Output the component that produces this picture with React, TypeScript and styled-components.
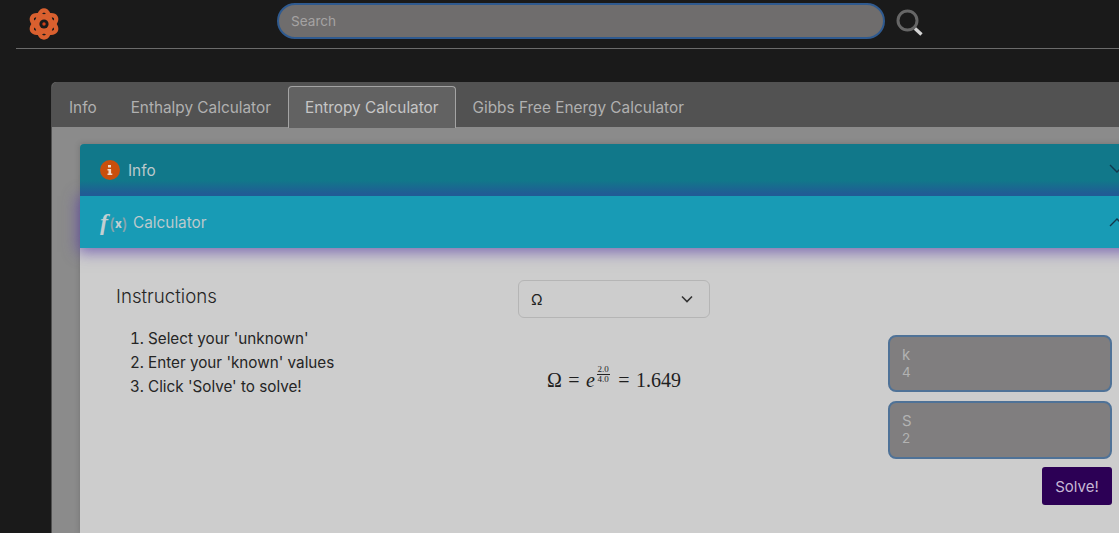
import React from "react";
import styled, { createGlobalStyle } from "styled-components";

const Global = createGlobalStyle`
  html, body { margin: 0; padding: 0; height: 533px; overflow: hidden; background: #1a1a1a; }
  body { font-family: Inter, Roboto, "Liberation Sans", sans-serif; }
  #root { height: 533px; overflow: hidden; }
`;

const Page = styled.div`
  width: 1119px;
  height: 533px;
  overflow: hidden;
  background: #1a1a1a;
`;
const Header = styled.header`
  display: flex;
  align-items: center;
  height: 48px;
  margin-left: 16px;
  border-bottom: 1px solid #6b6b6b;
`;
const LogoSlot = styled.div`
  display: flex;
  width: 261px;
  padding-left: 12px;
  box-sizing: border-box;
`;
const Search = styled.input`
  width: 608px;
  height: 36px;
  margin-top: -6px;
  box-sizing: border-box;
  border-radius: 18px;
  border: 2px solid #2f5a8f;
  background: #6f6d6d;
  padding: 0 12px;
  font: 13.6px Inter, sans-serif;
  outline: none;
  &::placeholder { color: #a5a3a3; opacity: 1; }
`;
const SearchIcon = styled.svg`
  margin: -3px 0 0 10px;
`;
const Main = styled.main`
  padding: 33px 0 0 52px;
`;
const Panel = styled.section`
  width: 1100px;
  height: 460px;
  background: #8b8b8b;
  border-radius: 5px 0 0 0;
  box-shadow: -1px 0 0 #505050;
  overflow: hidden;
`;
const TabBar = styled.nav`
  display: flex;
  height: 46px;
  box-sizing: border-box;
  padding: 4px 0 0;
  background: #525252;
  box-shadow: inset 0 -1px 0 #8b8b8b;
`;
const Tab = styled.div<{ $active?: boolean }>`
  box-sizing: border-box;
  height: 42px;
  padding: 0 16px;
  display: flex;
  align-items: center;
  font-size: 15.35px;
  color: ${p => (p.$active ? "#c6c6c6" : "#b0b0b0")};
  background: ${p => (p.$active ? "#626262" : "transparent")};
  border: 1px solid ${p => (p.$active ? "#a4a4a4" : "transparent")};
  border-bottom: 0;
  border-radius: 4px 4px 0 0;
`;
const Accordion = styled.div`
  width: 1060px;
  margin: 16px 0 0 28px;
  box-shadow: 0 0 6px rgba(0, 0, 0, 0.18);
`;
const InfoHead = styled.div`
  display: flex;
  align-items: center;
  height: 52px;
  box-sizing: border-box;
  padding: 0 0 0 20px;
  gap: 8px;
  background: linear-gradient(#11788a 0, #11788a 70%, #215b95 96%);
  color: #bcc9cc;
  font-size: 15.35px;
  border-radius: 4px 4px 0 0;
  position: relative;
  z-index: 1;
`;
const CalcHead = styled.div`
  position: relative;
  display: flex;
  align-items: center;
  height: 52px;
  box-sizing: border-box;
  padding-left: 20px;
  gap: 8px;
  background: #189bb5;
  color: #bcc9cc;
  font-size: 15.35px;
  box-shadow: 0 2px 14px 2px rgba(95, 70, 170, 0.75);
`;
const Chevron = styled.svg`
  position: absolute;
  right: 13px;
  top: 16px;
`;
const FxIcon = styled.span`
  display: inline-flex;
  align-items: center;
  color: #c2cfd2;
  width: 25px;
  white-space: nowrap;
`;
const FxF = styled.span`
  font: italic 700 24px "Liberation Serif", serif;
  margin-right: 1px;
`;
const FxParen = styled.span`
  font-size: 16px;
  font-weight: 500;
  color: #8aa5ad;
  margin-top: 4px;
`;
const FxX = styled.span`
  font-size: 11.5px;
  font-weight: 800;
  color: #c2cfd2;
  margin-top: 4px;
`;
const Body = styled.div`
  display: flex;
  height: 285px;
  background: #cdcdcd;
`;
const Left = styled.div`
  width: 402px;
  margin-left: 36px;
  padding-top: 37px;
  color: #252525;
`;
const Title = styled.h2`
  margin: 0;
  font-size: 18.7px;
  line-height: 24px;
  font-weight: 300;
`;
const Steps = styled.ol`
  margin: 18px 0 0;
  padding-left: 32px;
  font-size: 15.25px;
  line-height: 24px;
`;
const Middle = styled.div`
  width: 192px;
  padding-top: 32px;
  display: flex;
  flex-direction: column;
  align-items: center;
`;
const Select = styled.div`
  align-self: stretch;
  height: 38px;
  box-sizing: border-box;
  display: flex;
  align-items: center;
  justify-content: space-between;
  padding: 0 15px 0 12px;
  border: 1px solid #b5b5b5;
  border-radius: 6px;
  font: 15px Inter, sans-serif;
  color: #222;
`;
const Equation = styled.div`
  margin-top: 51px;
  display: flex;
  align-items: center;
  gap: 6.5px;
  white-space: nowrap;
  font: 20px "Liberation Serif", serif;
  color: #1f1f1f;
`;
const Base = styled.i`
  margin-right: 1px;
`;
const Power = styled.span`
  display: inline-flex;
  align-items: center;
  margin-left: -6px;
  margin-right: 2px;
  position: relative;
  top: -1px;
`;
const Fraction = styled.span`
  display: inline-flex;
  flex-direction: column;
  align-items: center;
  font-size: 9px;
  line-height: 9px;
  margin-top: -10px;
`;
const Numerator = styled.span`
  border-bottom: 1px solid #222;
  padding: 0 1px;
`;
const Right = styled.div`
  width: 224px;
  margin-left: 178px;
  padding-top: 87px;
  display: flex;
  flex-direction: column;
  gap: 9px;
`;
const Field = styled.label<{ $h: number }>`
  height: ${p => p.$h}px;
  box-sizing: border-box;
  display: flex;
  flex-direction: column;
  padding: 9px 12px;
  border: 2px solid #4f7297;
  border-radius: 8px;
  background: #807e7f;
  color: #b2b2b2;
  font-size: 13.5px;
`;
const FieldName = styled.span`
  font-size: 15px;
  line-height: 18px;
`;
const FieldValue = styled.span`
  line-height: 17px;
`;
const Solve = styled.button`
  align-self: flex-end;
  width: 70px;
  height: 38px;
  margin-top: -1px;
  border: 0;
  border-radius: 3px;
  background: #2c0055;
  color: #c6b8d6;
  font: 15px Inter, sans-serif;
`;

export default function App() {
  return (
    <Page>
      <Global />
      <Header>
        <LogoSlot>
          <svg width="32" height="34" viewBox="0 0 32 34" fill="none">
            <g stroke="#d9602f" strokeWidth="4.2">
              <ellipse cx="16" cy="17" rx="6.6" ry="13.6" />
              <ellipse cx="16" cy="17" rx="6.6" ry="13.6" transform="rotate(60 16 17)" />
              <ellipse cx="16" cy="17" rx="6.6" ry="13.6" transform="rotate(120 16 17)" />
            </g>
            <circle cx="16" cy="17" r="6.6" fill="#d9602f" />
            <circle cx="16" cy="17" r="4.6" fill="#1a1a1a" />
            <circle cx="16" cy="17" r="1.7" fill="#d0401a" />
          </svg>
        </LogoSlot>
        <Search placeholder="Search" />
        <SearchIcon width="30" height="30" viewBox="0 0 30 30" fill="none">
          <circle cx="12.5" cy="12.5" r="9.5" stroke="#666" strokeWidth="3" />
          <path d="M20 20.5 L26.5 26.5" stroke="#d4d4d4" strokeWidth="3.4" />
        </SearchIcon>
      </Header>
      <Main>
        <Panel>
          <TabBar>
            <Tab>Info</Tab>
            <Tab>Enthalpy Calculator</Tab>
            <Tab $active>Entropy Calculator</Tab>
            <Tab>Gibbs Free Energy Calculator</Tab>
          </TabBar>
          <Accordion>
            <InfoHead>
              <svg width="20" height="20" viewBox="0 0 20 20">
                <circle cx="10" cy="10" r="10" fill="#c94f0c" />
                <path d="M8 5h3v2.4H8zM7.5 9h3.6v4.4h1.2V15H7.5v-1.6h1V10.6h-1z" fill="#f1d9c8" />
              </svg>
              Info
              <Chevron width="20" height="20" viewBox="0 0 20 20" fill="none">
                <path d="M3 5 L10 12 L17 5" stroke="#123a4e" strokeWidth="1.4" />
              </Chevron>
            </InfoHead>
            <CalcHead>
              <FxIcon>
                <FxF>f</FxF>
                <FxParen>(</FxParen>
                <FxX>x</FxX>
                <FxParen>)</FxParen>
              </FxIcon>
              Calculator
              <Chevron width="20" height="20" viewBox="0 0 20 20" fill="none">
                <path d="M3 14 L10 7 L17 14" stroke="#123a4e" strokeWidth="1.4" />
              </Chevron>
            </CalcHead>
            <Body>
              <Left>
                <Title>Instructions</Title>
                <Steps>
                  <li>Select your 'unknown'</li>
                  <li>Enter your 'known' values</li>
                  <li>Click 'Solve' to solve!</li>
                </Steps>
              </Left>
              <Middle>
                <Select>
                  Ω
                  <svg width="14" height="14" viewBox="0 0 14 14" fill="none">
                    <path d="M2 4.5 L7 9.5 L12 4.5" stroke="#333" strokeWidth="1.6" />
                  </svg>
                </Select>
                <Equation>
                  <span>Ω</span>
                  <span>=</span>
                  <Base>e</Base>
                  <Power>
                    <Fraction>
                      <Numerator>2.0</Numerator>
                      <span>4.0</span>
                    </Fraction>
                  </Power>
                  <span>=</span>
                  <span>1.649</span>
                </Equation>
              </Middle>
              <Right>
                <Field $h={57}>
                  <FieldName>k</FieldName>
                  <FieldValue>4</FieldValue>
                </Field>
                <Field $h={58}>
                  <FieldName>S</FieldName>
                  <FieldValue>2</FieldValue>
                </Field>
                <Solve>Solve!</Solve>
              </Right>
            </Body>
          </Accordion>
        </Panel>
      </Main>
    </Page>
  );
}
